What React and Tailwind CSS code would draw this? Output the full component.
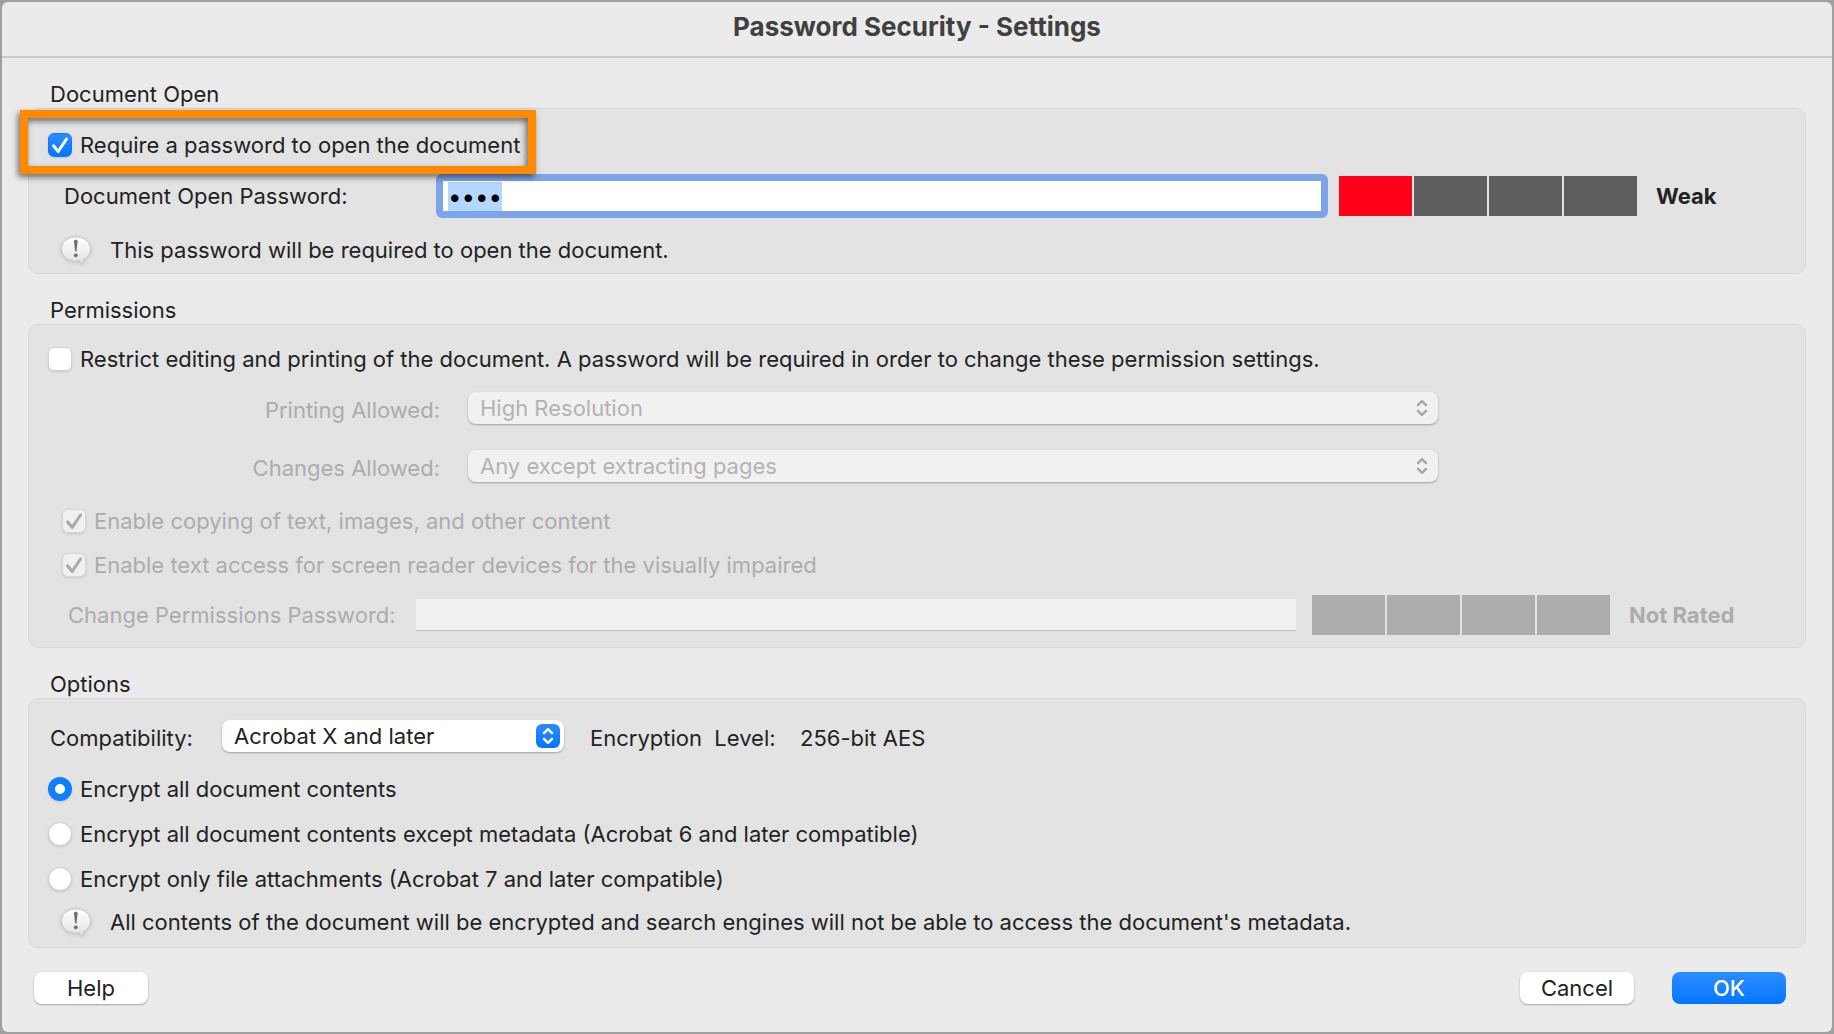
import React, { useState, useEffect, useRef } from 'react';

const InfoBubble = () => (
  <svg width="32" height="30" viewBox="0 -1 32 30" className="block shrink-0 drop-shadow-sm" aria-hidden="true">
    <defs>
      <linearGradient id="bubble" x1="0" y1="0" x2="0" y2="1">
        <stop offset="0" stopColor="#ffffff" />
        <stop offset="1" stopColor="#e2e2e2" />
      </linearGradient>
    </defs>
    <path
      d="M16 1C7.700 1 1.500 6.200 1.500 13.100c0 7 6.200 12 14.500 12 1.300 0 2.500-.1 3.600-.3 1.100 1.700 2.300 2.600 3.700 3-.5-1.200-.5-2.700.1-4.300 4.300-2 7.100-5.800 7.100-10.400C30.500 6.200 24.300 1 16 1Z"
      fill="url(#bubble)"
      stroke="#c6c6c6"
      strokeWidth="1"
    />
    <path d="M14 5.500c0-1.100.8-1.700 1.800-1.700s1.800.6 1.800 1.700l-1.100 9.900h-1.400Z" fill="#6c6c6c" />
    <circle cx="15.800" cy="19.300" r="1.900" fill="#6c6c6c" />
  </svg>
);

const CheckMark = ({ color }) => (
  <svg viewBox="0 0 24 24" className={`pointer-events-none absolute inset-0 h-6 w-6 ${color}`} aria-hidden="true">
    <path d="M5.500 12.800 10.200 18.500 18.500 6" fill="none" stroke="currentColor" strokeWidth="3" strokeLinecap="round" strokeLinejoin="round" />
  </svg>
);

const CheckBox = ({ label, checked, onChange, disabled, children }) => (
  <label className={`relative flex h-6 w-fit items-center gap-2 ${disabled ? 'text-[#acacac]' : ''}`}>
    <span className="relative h-6 w-6 shrink-0">
      <input
        type="checkbox"
        checked={checked}
        onChange={onChange}
        disabled={disabled}
        className="block h-6 w-6 appearance-none rounded-[6px] border border-[#d0d0d0] bg-white shadow-sm checked:border-[#0a7aff] checked:bg-linear-to-b checked:from-[#2b8cff] checked:to-[#0076ff] disabled:border-[#d8d8d8] disabled:bg-[#f0f0f0] disabled:bg-none"
      />
      {checked && <CheckMark color={disabled ? 'text-[#a9a9a9]' : 'text-white'} />}
    </span>
    <span className="whitespace-nowrap">{label}</span>
    {children}
  </label>
);

const Radio = ({ label, value, selected, onSelect }) => (
  <label className="flex h-6 w-fit items-center gap-2">
    <input
      type="radio"
      name="encrypt"
      value={value}
      checked={selected === value}
      onChange={() => onSelect(value)}
      className="block h-6 w-6 shrink-0 appearance-none rounded-full border border-[#cdcdcd] bg-white shadow-sm checked:border-[7px] checked:border-[#0f7fff]"
    />
    <span className="whitespace-nowrap">{label}</span>
  </label>
);

const Arrows = () => (
  <svg viewBox="0 0 24 24" className="block h-6 w-6" aria-hidden="true">
    <path d="m8 9.200 4-4 4 4M8 14.800l4 4 4-4" fill="none" stroke="currentColor" strokeWidth="2.400" strokeLinecap="round" strokeLinejoin="round" />
  </svg>
);

const PopUp = ({ id, options, disabled, className }) => (
  <div className={`relative ${className}`}>
    <select
      id={id}
      disabled={disabled}
      className={`block h-8 w-full appearance-none rounded-[8px] px-3 leading-8 shadow-[0_1px_2px_rgba(0,0,0,0.3)] outline-none disabled:opacity-100 ${
        disabled ? 'bg-[#f1f1f1] text-[#b3b3b3]' : 'bg-white'
      }`}
    >
      {options.map((o) => (
        <option key={o}>{o}</option>
      ))}
    </select>
    <span
      className={`pointer-events-none absolute top-1 right-1 rounded-[6px] ${
        disabled ? 'text-[#a6a6a6]' : 'bg-linear-to-b from-[#2b8cff] to-[#0076ff] text-white'
      }`}
    >
      <Arrows />
    </span>
  </div>
);

const Strength = ({ colors, text, className }) => (
  <>
    <div className="flex shrink-0 gap-[2px]">
      {colors.map((c, i) => (
        <div key={i} className={`h-10 w-[73px] ${c}`}></div>
      ))}
    </div>
    <span className={`shrink-0 font-bold whitespace-nowrap ${className}`}>{text}</span>
  </>
);

const Section = ({ title, className, children }) => (
  <section>
    <h2 className="h-7 pl-[22px] leading-7">{title}</h2>
    <div className={`rounded-[10px] border border-[#d9d9d9] bg-[#e3e3e3] ${className}`}>{children}</div>
  </section>
);

const Note = ({ children, className }) => (
  <div className={`flex h-7 items-center gap-[18px] pl-[31px] ${className}`}>
    <InfoBubble />
    <p className="whitespace-nowrap">{children}</p>
  </div>
);

const buttonBase = 'h-8 w-[114px] rounded-[8px] leading-8';

const App = () => {
  const [requireOpen, setRequireOpen] = useState(true);
  const [restrict, setRestrict] = useState(false);
  const [scope, setScope] = useState('all');
  const [password, setPassword] = useState('1234');
  const passwordRef = useRef(null);

  useEffect(() => {
    passwordRef.current?.focus();
    passwordRef.current?.select();
  }, []);

  return (
    <div className="flex min-h-screen flex-col bg-[#9f9f9f] p-[2px] font-['Inter','Liberation_Sans',sans-serif] text-[22px] leading-7 text-[#222222]">
      <form className="flex flex-1 flex-col rounded-[6px] bg-[#ebebeb]" onSubmit={(e) => e.preventDefault()}>
        <header className="flex h-[56px] items-center justify-center border-b-2 border-[#cacaca] pb-1">
          <h1 className="text-[26px] font-bold text-[#404040]">Password Security - Settings</h1>
        </header>

        <div className="flex flex-col gap-[22px] px-[26px] pt-[22px]">
          <Section title="Document Open" className="pt-6 pb-[9px]">
            <div className="pl-[19px]">
              <CheckBox
                label="Require a password to open the document"
                checked={requireOpen}
                onChange={(e) => setRequireOpen(e.target.checked)}
              >
                {/* Callout frame around the option */}
                <span className="pointer-events-none absolute -top-[23px] -right-4 -bottom-[17px] -left-[28px] z-10 border-8 border-[#ff8a00] drop-shadow-[-2px_3px_3px_rgba(0,0,0,0.55)]"></span>
              </CheckBox>
            </div>
            <div className="mt-[17px] flex h-11 items-center pl-[35px]">
              <label htmlFor="open-password" className="w-[372px] shrink-0">
                Document Open Password:
              </label>
              <input
                id="open-password"
                ref={passwordRef}
                type="password"
                value={password}
                onChange={(e) => setPassword(e.target.value)}
                className="mr-[11px] h-11 min-w-0 flex-1 rounded-[6px] border-[7px] border-[#7ba4ea] bg-white px-[5px] text-2xl text-black outline-none selection:bg-[#b3d7ff] selection:text-black"
              />
              <Strength
                colors={['bg-[#ff0019]', 'bg-[#5e5e5e]', 'bg-[#5e5e5e]', 'bg-[#5e5e5e]']}
                text="Weak"
                className="w-[168px] pl-[19px]"
              />
            </div>
            <Note className="mt-[18px]">This password will be required to open the document.</Note>
          </Section>

          <Section title="Permissions" className="pt-[22px] pb-3">
            <div className="pl-[19px]">
              <CheckBox
                label="Restrict editing and printing of the document. A password will be required in order to change these permission settings."
                checked={restrict}
                onChange={(e) => setRestrict(e.target.checked)}
              />
            </div>
            <div className="mt-[21px] flex flex-col gap-[26px] pr-[367px]">
              <div className="flex h-8 items-center gap-7">
                <label htmlFor="printing" className="w-[411px] shrink-0 pt-1 text-right text-[#acacac]">
                  Printing Allowed:
                </label>
                <PopUp id="printing" options={['High Resolution']} disabled className="flex-1" />
              </div>
              <div className="flex h-8 items-center gap-7">
                <label htmlFor="changes" className="w-[411px] shrink-0 pt-1 text-right text-[#acacac]">
                  Changes Allowed:
                </label>
                <PopUp id="changes" options={['Any except extracting pages']} disabled className="flex-1" />
              </div>
            </div>
            <div className="mt-[27px] flex flex-col gap-5 pl-[33px]">
              <CheckBox label="Enable copying of text, images, and other content" checked disabled />
              <CheckBox label="Enable text access for screen reader devices for the visually impaired" checked disabled />
            </div>
            <div className="mt-[18px] flex items-center pl-[39px] text-[#acacac]">
              <label htmlFor="perm-password" className="w-[348px] shrink-0">
                Change Permissions Password:
              </label>
              <input
                id="perm-password"
                type="password"
                disabled
                className="mr-4 h-8 min-w-0 flex-1 border-b border-[#c4c4c4] bg-[#f0f0f0] px-[5px]"
              />
              <Strength
                colors={['bg-[#acacac]', 'bg-[#acacac]', 'bg-[#acacac]', 'bg-[#acacac]']}
                text="Not Rated"
                className="w-[195px] pl-[19px]"
              />
            </div>
          </Section>

          <Section title="Options" className="pt-[21px] pb-[11px]">
            <div className="flex h-8 items-center pl-[21px]">
              <label htmlFor="compat" className="w-[172px] shrink-0 pt-1">
                Compatibility:
              </label>
              <PopUp id="compat" options={['Acrobat X and later']} className="w-[342px]" />
              <span className="box-content w-[210px] pt-1 pl-[26px] whitespace-pre">Encryption  Level:</span>
              <span className="pt-1">256-bit AES</span>
            </div>
            <div className="mt-[25px] flex flex-col gap-[21px] pl-[19px]">
              <Radio label="Encrypt all document contents" value="all" selected={scope} onSelect={setScope} />
              <Radio
                label="Encrypt all document contents except metadata (Acrobat 6 and later compatible)"
                value="except-metadata"
                selected={scope}
                onSelect={setScope}
              />
              <Radio
                label="Encrypt only file attachments (Acrobat 7 and later compatible)"
                value="attachments"
                selected={scope}
                onSelect={setScope}
              />
            </div>
            <Note className="mt-[17px]">
              All contents of the document will be encrypted and search engines will not be able to access the document's metadata.
            </Note>
          </Section>
        </div>

        <footer className="mt-6 flex items-center pr-[46px] pb-7 pl-8">
          <button type="button" className={`${buttonBase} bg-white shadow-[0_1px_2px_rgba(0,0,0,0.3)]`}>
            Help
          </button>
          <button type="button" className={`${buttonBase} mr-[38px] ml-auto bg-white shadow-[0_1px_2px_rgba(0,0,0,0.3)]`}>
            Cancel
          </button>
          <button type="submit" className={`${buttonBase} bg-linear-to-b from-[#2b8cff] to-[#0076ff] font-medium text-white`}>
            OK
          </button>
        </footer>
      </form>
    </div>
  );
};

export default App;
